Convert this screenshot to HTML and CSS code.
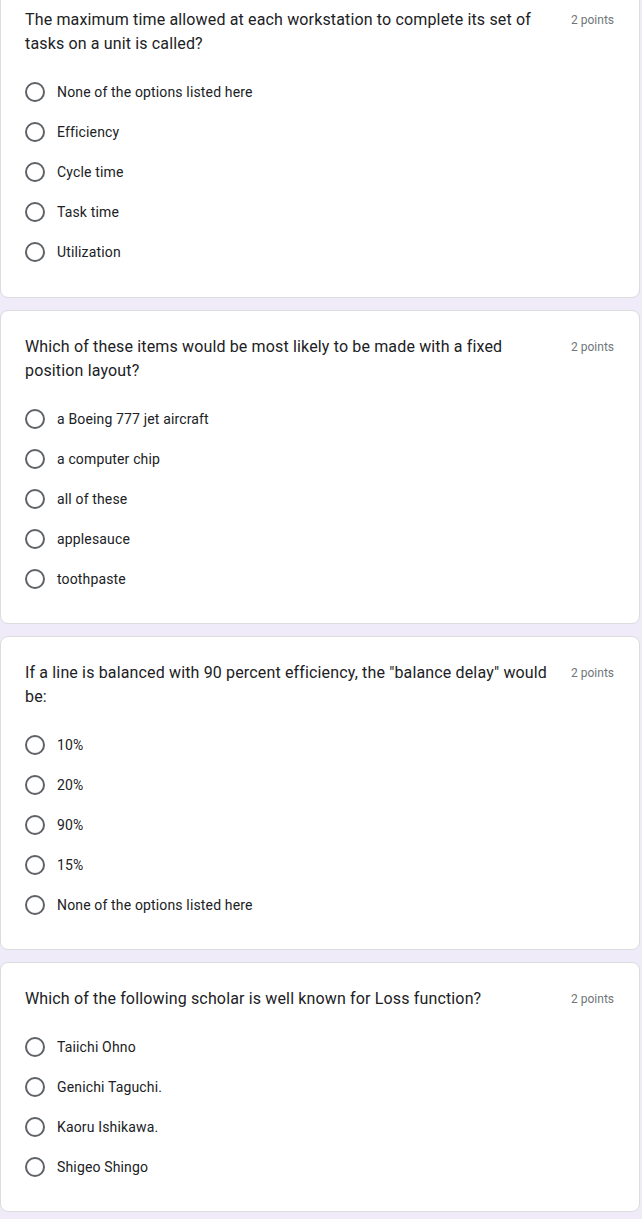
FILE: index.html
```html
<!DOCTYPE html>
<html>
<head>
<meta charset="utf-8">
<link rel="stylesheet" href="styles.css">
</head>
<body>
<div class="page">
  <div class="card first">
    <div class="qhead">
      <div class="qtitle">The maximum time allowed at each workstation to complete its set of tasks on a unit is called?</div>
      <div class="points">2 points</div>
    </div>
    <div class="options">
      <div class="opt"><span class="radio"></span><span class="label">None of the options listed here</span></div>
      <div class="opt"><span class="radio"></span><span class="label">Efficiency</span></div>
      <div class="opt"><span class="radio"></span><span class="label">Cycle time</span></div>
      <div class="opt"><span class="radio"></span><span class="label">Task time</span></div>
      <div class="opt"><span class="radio"></span><span class="label">Utilization</span></div>
    </div>
  </div>
  <div class="card">
    <div class="qhead">
      <div class="qtitle">Which of these items would be most likely to be made with a fixed position layout?</div>
      <div class="points">2 points</div>
    </div>
    <div class="options">
      <div class="opt"><span class="radio"></span><span class="label">a Boeing 777 jet aircraft</span></div>
      <div class="opt"><span class="radio"></span><span class="label">a computer chip</span></div>
      <div class="opt"><span class="radio"></span><span class="label">all of these</span></div>
      <div class="opt"><span class="radio"></span><span class="label">applesauce</span></div>
      <div class="opt"><span class="radio"></span><span class="label">toothpaste</span></div>
    </div>
  </div>
  <div class="card">
    <div class="qhead">
      <div class="qtitle">If a line is balanced with 90 percent efficiency, the "balance delay" would be:</div>
      <div class="points">2 points</div>
    </div>
    <div class="options">
      <div class="opt"><span class="radio"></span><span class="label">10%</span></div>
      <div class="opt"><span class="radio"></span><span class="label">20%</span></div>
      <div class="opt"><span class="radio"></span><span class="label">90%</span></div>
      <div class="opt"><span class="radio"></span><span class="label">15%</span></div>
      <div class="opt"><span class="radio"></span><span class="label">None of the options listed here</span></div>
    </div>
  </div>
  <div class="card">
    <div class="qhead">
      <div class="qtitle">Which of the following scholar is well known for Loss function?</div>
      <div class="points">2 points</div>
    </div>
    <div class="options">
      <div class="opt"><span class="radio"></span><span class="label">Taiichi Ohno</span></div>
      <div class="opt"><span class="radio"></span><span class="label">Genichi Taguchi.</span></div>
      <div class="opt"><span class="radio"></span><span class="label">Kaoru Ishikawa.</span></div>
      <div class="opt"><span class="radio"></span><span class="label">Shigeo Shingo</span></div>
    </div>
  </div>
</div>
</body>
</html>
```

FILE: styles.css
```css
html, body {
  margin: 0;
  padding: 0;
  background: #efebf8;
}
body {
  font-family: Roboto, "Liberation Sans", Arial, sans-serif;
  color: #202124;
}
.page {
  display: flex;
  flex-direction: column;
  gap: 12px;
  width: 640px;
  padding-bottom: 20px;
}
.card {
  background: #ffffff;
  border: 1px solid #dadce0;
  border-radius: 8px;
  padding: 24px;
}
.card.first {
  margin-top: -17px;
  padding-bottom: 25px;
}
.qhead {
  display: flex;
  align-items: flex-start;
}
.qtitle {
  flex: 1 1 auto;
  font-size: 16px;
  line-height: 24px;
  letter-spacing: 0.15px;
  color: #202124;
  padding-right: 16px;
}
.points {
  flex: 0 0 auto;
  font-size: 12px;
  line-height: 24px;
  color: #70757a;
  padding-right: 1px;
}
.options {
  display: flex;
  flex-direction: column;
  margin-top: 16px;
}
.opt {
  display: flex;
  align-items: center;
  height: 40px;
}
.radio {
  box-sizing: border-box;
  width: 20px;
  height: 20px;
  border: 2px solid #5f6368;
  border-radius: 50%;
  margin-right: 12px;
  flex: 0 0 auto;
}
.label {
  font-size: 14px;
  line-height: 20px;
  color: #202124;
  letter-spacing: 0.15px;
}
```
